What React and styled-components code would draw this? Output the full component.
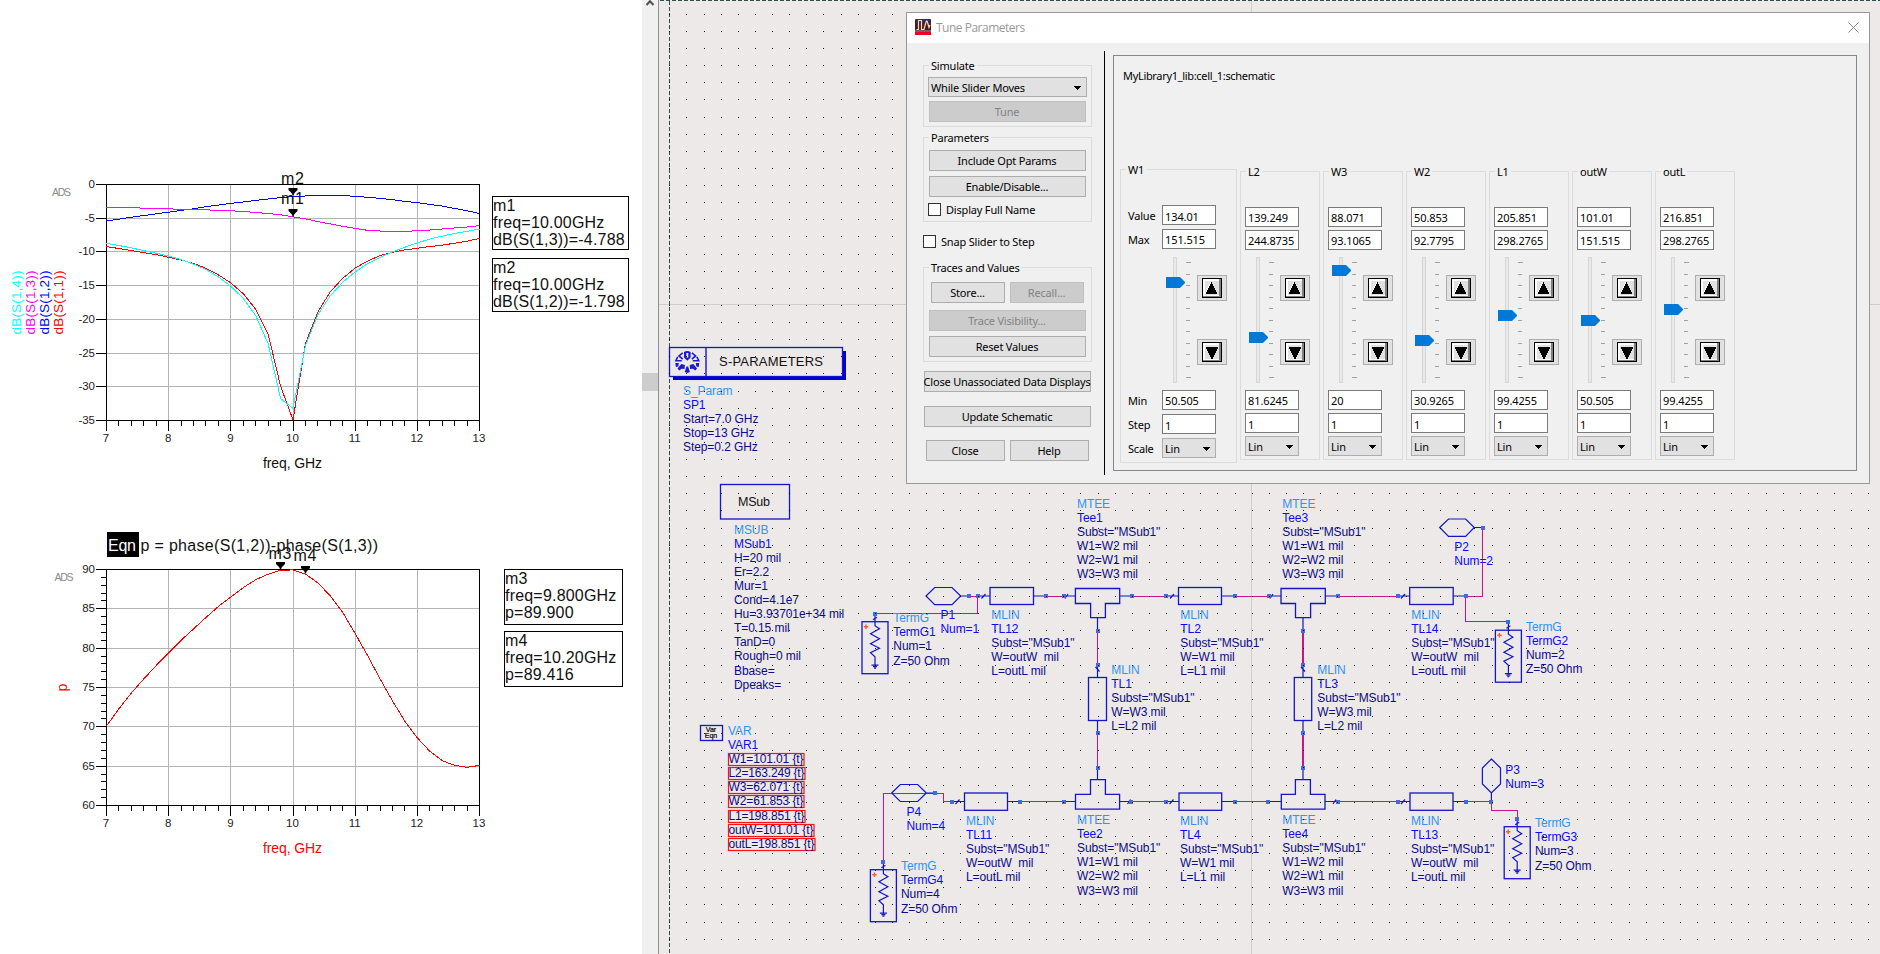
import React from "react";
import styled, { createGlobalStyle } from "styled-components";

const GlobalStyle = createGlobalStyle`
  * { box-sizing: border-box; }
  body { margin: 0; background: #fff; overflow: hidden; }
`;

const Screen = styled.div`
  position: relative;
  display: flex;
  width: 1880px;
  height: 954px;
  overflow: hidden;
  font-family: "Liberation Sans", Arial, sans-serif;
`;

/* ---------- data display ---------- */

const DataDisplay = styled.section`
  width: 642px;
  display: flex;
  flex-direction: column;
  background: #fff;
`;

const PlotRow = styled.div`
  display: flex;
  height: ${(p) => p.$height}px;
`;

const PlotSvg = styled.svg`
  flex: none;
  display: block;
  overflow: visible;
  font-family: "Liberation Sans", Arial, sans-serif;
`;

const Readouts = styled.div`
  display: flex;
  flex-direction: column;
  gap: ${(p) => p.$gap}px;
  padding-top: ${(p) => p.$top}px;
  margin-left: ${(p) => p.$left}px;
`;

const Readout = styled.div`
  width: ${(p) => p.$width}px;
  height: ${(p) => p.$height}px;
  border: 1px solid #000;
  font-size: 16px;
  line-height: 17px;
  letter-spacing: 0.2px;
  white-space: pre;
  color: #111;
`;

const PX = 106.5;
const UX = 62.17;
const fx = (f) => PX + (f - 7) * UX;

const series = (text) => text.split(" ").map(Number);

const S11 = series("-9.2 -9.5 -9.8 -10.1 -10.4 -10.8 -11.2 -11.7 -12.45 -13.4 -14.6 -16.2 -18.5 -22.2 -29.9 -34.9 -23.6 -18.9 -15.9 -13.9 -12.4 -11.35 -10.55 -10.05 -9.7 -9.45 -9.2 -9 -8.7 -8.4 -8");
const S14 = series("-8.75 -9.05 -9.4 -9.8 -10.2 -10.6 -11.15 -11.8 -12.6 -13.7 -15.1 -16.9 -19.45 -23.6 -31.75 -33.2 -23.9 -19.3 -16.5 -14.5 -12.95 -11.75 -10.8 -10 -9.3 -8.65 -8.1 -7.65 -7.25 -6.95 -6.6");
const S12 = series("-5.4 -5.15 -4.85 -4.6 -4.35 -4.1 -3.85 -3.6 -3.3 -3.05 -2.8 -2.6 -2.35 -2.15 -1.95 -1.8 -1.7 -1.65 -1.63 -1.65 -1.75 -1.9 -2.05 -2.25 -2.5 -2.7 -2.95 -3.2 -3.55 -3.9 -4.3");
const S13 = series("-3.4 -3.42 -3.45 -3.5 -3.55 -3.6 -3.7 -3.7 -3.75 -3.85 -3.9 -4 -4.15 -4.3 -4.5 -4.79 -5.1 -5.5 -5.85 -6.2 -6.5 -6.8 -6.9 -6.95 -6.95 -6.85 -6.75 -6.6 -6.45 -6.3 -6.1");
const PHASE = series("70.1 72.3 74.3 76.1 77.8 79.4 81 82.45 83.9 85.3 86.5 87.7 88.7 89.4 89.9 89.95 89.42 88.3 86.65 84.55 81.85 79.05 76.1 73.3 70.7 68.6 66.9 65.7 65.1 64.85 65.1");

function Trace({ values, color, fy }) {
  return (
    <polyline
      points={values.map((v, i) => `${fx(7 + i * 0.2)},${fy(v)}`).join(" ")}
      fill="none"
      stroke={color}
      shapeRendering="crispEdges"
    />
  );
}

function Axes({ top, min, max, minorY }) {
  const bottom = top + 236;
  const fy = (v) => top + ((max - v) / (max - min)) * 236;
  const majors = [];
  for (let v = max; v >= min; v -= 5) majors.push(v);
  const minors = [];
  if (minorY) for (let v = min; v < max; v += 1) if (v % 5) minors.push(v);
  const freqs = [7, 8, 9, 10, 11, 12, 13];
  return (
    <g shapeRendering="crispEdges">
      {majors.slice(1, -1).map((v) => (
        <line key={v} x1={107} x2={479} y1={fy(v)} y2={fy(v)} stroke="#b4b4b4" />
      ))}
      {freqs.slice(1, -1).map((f) => (
        <line key={f} x1={fx(f)} x2={fx(f)} y1={top} y2={bottom} stroke="#b4b4b4" />
      ))}
      <rect x={106.5} y={top} width={373} height={236} fill="none" stroke="#000" />
      {majors.map((v) => (
        <line key={v} x1={96} x2={107} y1={fy(v)} y2={fy(v)} stroke="#000" />
      ))}
      {minors.map((v) => (
        <line key={v} x1={101} x2={107} y1={fy(v)} y2={fy(v)} stroke="#000" />
      ))}
      {Array.from({ length: 31 }, (_, i) => (
        <line key={i} x1={fx(7 + i * 0.2)} x2={fx(7 + i * 0.2)} y1={bottom} y2={bottom + (i % 5 ? 5 : 10)} stroke="#000" />
      ))}
      {majors.map((v) => (
        <text key={v} x={95} y={fy(v) + 3.5} fontSize={11.5} textAnchor="end" fill="#222">{v}</text>
      ))}
      {freqs.map((f) => (
        <text key={f} x={fx(f) - 0.5} y={bottom + 21.5} fontSize={11.5} textAnchor="middle" fill="#222">{f}</text>
      ))}
    </g>
  );
}

function Marker({ label, x, tip, textY }) {
  return (
    <g>
      <path d={`M${x - 4.5} ${tip - 8}h9v2l-3 3l-1.5 3l-1.5 -3l-3 -3z`} fill="#000" />
      <text x={x - 12} y={textY} fontSize={16} textLength={23} fill="#111">{label}</text>
    </g>
  );
}

function DbPlot() {
  const fy = (v) => 184.5 - v * (236 / 35);
  const labels = [
    ["dB(S(1,4))", "#00ffff", 21],
    ["dB(S(1,3))", "#ff00ff", 35],
    ["dB(S(1,2))", "#0000ff", 49],
    ["dB(S(1,1))", "#ff0000", 63],
  ];
  return (
    <PlotSvg width="482" height="510">
      <Axes top={184.5} min={-35} max={0} />
      <text x={52} y={196} fontSize={10.5} textLength={19} fill="#8a8a8a">ADS</text>
      {labels.map(([t, c, x]) => (
        <text key={t} transform={`translate(${x} 334.5) rotate(-90)`} fontSize={13.5} textLength={64} fill={c}>{t}</text>
      ))}
      <Trace values={S12} color="#0000ff" fy={fy} />
      <Trace values={S13} color="#ff00ff" fy={fy} />
      <Trace values={S11} color="#ff0000" fy={fy} />
      <Trace values={S14} color="#00ffff" fy={fy} />
      <Marker label="m2" x={293} tip={196} textY={184} />
      <Marker label="m1" x={293} tip={217} textY={204} />
      <text x={263} y={468} fontSize={14} textLength={59} fill="#111">freq, GHz</text>
    </PlotSvg>
  );
}

function PhasePlot() {
  const fy = (v) => 59.5 + (90 - v) * (236 / 30);
  return (
    <PlotSvg width="482" height="444">
      <Axes top={59.5} min={60} max={90} minorY />
      <text x={54.5} y={71} fontSize={10.5} textLength={19} fill="#8a8a8a">ADS</text>
      <text transform="translate(67 181.5) rotate(-90)" fontSize={14} fill="#ff0000">p</text>
      <Trace values={PHASE} color="#ff0000" fy={fy} />
      <rect x={107} y={22} width={32} height={25} fill="#000" />
      <text x={108} y={40.5} fontSize={16} textLength={28} fill="#fff">Eqn</text>
      <text x={140.5} y={40.5} fontSize={16} textLength={237.5} fill="#111">p = phase(S(1,2))-phase(S(1,3))</text>
      <Marker label="m3" x={280.5} tip={60} textY={48.5} />
      <Marker label="m4" x={305.5} tip={64} textY={50.5} />
      <text x={263} y={343} fontSize={14} textLength={59} fill="#ff0000">freq, GHz</text>
    </PlotSvg>
  );
}

const ScrollTrack = styled.div`
  display: flex;
  flex-direction: column;
  align-items: center;
  width: 17px;
  background: #f0f0f0;
  border-right: 1px solid #919191;
`;

const ScrollArrow = styled.svg`
  display: block;
  height: 373px;
  flex: none;
`;

const ScrollThumb = styled.div`
  width: 100%;
  height: 18px;
  background: #cdcdcd;
`;

/* ---------- schematic ---------- */

const SchematicSvg = styled.svg`
  display: block;
  flex: none;
  background: #ede9e8;
  font-family: "Liberation Sans", Arial, sans-serif;
  font-size: 12px;
`;

const WIRE = "#c71585";
const LINE = "#1414c8";

const DOTS = (() => {
  let d = "";
  for (let j = 0; j < 55; j++) {
    const y = Math.floor(14.28 + 17.1277 * j);
    for (let i = -1; i < 70; i++) {
      const x = Math.floor(686.9 + 17.13 * i);
      d += `M${x} ${y}h1v1h-1z`;
    }
  }
  return d;
})();

function Lines({ x, y, type, name, params = [] }) {
  const all = [];
  if (type) all.push([type, "#2e93f5"]);
  name.forEach((n) => all.push([n, "#0a0aff"]));
  params.forEach((p) => all.push([p, "#0c0c86"]));
  return all.map(([t, c], i) => (
    <text key={i} x={x} y={Math.round(y + i * 14.1)} fill={c} letterSpacing={-0.08} xmlSpace="preserve">{t}</text>
  ));
}

function Pin({ x, y }) {
  return <rect x={Math.round(x) - 2} y={Math.round(y) - 2} width={4} height={4} fill="#4169e1" />;
}

function Term({ x, y, tx, n }) {
  return (
    <g>
      <g transform={`translate(${x} ${y})`} fill="none" stroke={LINE}>
        <rect x={-13} y={8} width={26} height={52} strokeWidth={1.3} />
        <path strokeWidth={1.2} d="M0 0V12L4.5 15L-4.5 20L4.5 25L-4.5 30L4.5 34.5L-4.5 39L0 43V52M-2 6L2 3.5" />
        <path strokeWidth={1.2} d="M-3.5 51.5H3.5M-2 53H2M-1 54.5H1" />
        <path stroke="#ff5a28" strokeWidth={1.4} d="M-11.2 13H-6.8M-9 10.8V15.2" />
      </g>
      <Pin x={x} y={y} />
      <Lines x={tx} y={y + 8.5} type="TermG" name={[`TermG${n}`]} params={[`Num=${n}`, "Z=50 Ohm"]} />
    </g>
  );
}

const BOXES = [
  [990, 587.5, 43.5, 17], [1178.5, 587.5, 43, 17], [1409.7, 587.5, 43.5, 17],
  [964.5, 793, 43, 17.3], [1179, 793, 42.7, 17.3], [1410, 793, 43, 17.3],
  [1088.5, 677.5, 18, 43], [1294.3, 677.5, 17.4, 43],
];

const PINS = [
  [969, 596], [977.5, 596], [1046, 596], [1064, 596], [1131.5, 596], [1166, 596], [1234.5, 596], [1268.7, 596],
  [1337.5, 596], [1397.7, 596], [1465.6, 596], [1483, 527.5],
  [1097.5, 631], [1097.5, 664.5], [1097.5, 733], [1097.5, 767.5],
  [1303, 631], [1303, 664.5], [1303, 733], [1303, 767.5],
  [935, 793], [952, 801.5], [1020.3, 801.5], [1063.6, 801.5], [1131.4, 801.5], [1166, 801.5], [1234.5, 801.5],
  [1268.4, 801.5], [1337.6, 801.5], [1397.6, 801.5], [1465.5, 801.5], [1491.4, 801.5],
];

const MSUB = ["H=20 mil", "Er=2.2", "Mur=1", "Cond=4.1e7", "Hu=3.93701e+34 mil", "T=0.15 mil", "TanD=0", "Rough=0 mil", "Bbase=", "Dpeaks="];
const SUBST = 'Subst="MSub1"';
const OUT = [SUBST, "W=outW  mil", "L=outL mil"];

const BLOCKS = [
  [683, 394.6, "S_Param", "SP1", ["Start=7.0 GHz", "Stop=13 GHz", "Step=0.2 GHz"]],
  [734, 533.5, "MSUB", "MSub1", MSUB],
  [728, 734.6, "VAR", "VAR1", []],
  [1077, 507.7, "MTEE", "Tee1", [SUBST, "W1=W2 mil", "W2=W1 mil", "W3=W3 mil"]],
  [1282.3, 507.7, "MTEE", "Tee3", [SUBST, "W1=W1 mil", "W2=W2 mil", "W3=W3 mil"]],
  [991.3, 619, "MLIN", "TL12", OUT],
  [1180.3, 619, "MLIN", "TL2", [SUBST, "W=W1 mil", "L=L1 mil"]],
  [1411.3, 619, "MLIN", "TL14", OUT],
  [1111.3, 673.5, "MLIN", "TL1", [SUBST, "W=W3 mil", "L=L2 mil"]],
  [1317.3, 673.5, "MLIN", "TL3", [SUBST, "W=W3 mil", "L=L2 mil"]],
  [966, 825, "MLIN", "TL11", OUT],
  [1077, 824, "MTEE", "Tee2", [SUBST, "W1=W1 mil", "W2=W2 mil", "W3=W3 mil"]],
  [1180, 825, "MLIN", "TL4", [SUBST, "W=W1 mil", "L=L1 mil"]],
  [1282.3, 824, "MTEE", "Tee4", [SUBST, "W1=W2 mil", "W2=W1 mil", "W3=W3 mil"]],
  [1411, 825, "MLIN", "TL13", OUT],
];

const VARS = [
  ["W1=101.01 {t}", 76], ["L2=163.249 {t}", 77], ["W3=62.071 {t}", 76], ["W2=61.853 {t}", 76],
  ["L1=198.851 {t}", 77], ["outW=101.01 {t}", 86], ["outL=198.851 {t}", 87],
];

function SParamSymbol() {
  return (
    <g>
      <path d="M673 376.5H842.7V351H846V380H673z" fill="#0000d2" />
      <rect x={669.5} y={347.5} width={173} height={29} fill="#ede9e8" stroke={LINE} strokeWidth={1.3} />
      <path d="M706 347.5V376.5" stroke={LINE} strokeWidth={1.4} />
      <g transform="translate(687.3 361.5)" fill="#1a1ad0">
        <path d="M-3.3 -9.5Q0 -11.5 3.3 -9.5V-4L0 -0.8L-3.3 -4zM-1 -8.5V-4H1V-8.5z" fillRule="evenodd" />
        <path d="M-4.6 -8.6L-8.3 -5.6L-4.6 -2.4M4.6 -8.6L8.3 -5.6L4.6 -2.4M-9.6 -4.6L-11.4 -0.8H-5.5M9.6 -4.6L11.4 -0.8H5.5" fill="none" stroke="#1a1ad0" strokeWidth={1.6} />
        <path d="M-12 1.5H-8.5L-9 5L-11.4 5.5zM12 1.5H8.5L9 5L11.4 5.5z" />
        <path d="M-9.8 7L-6 2.4L-2.4 3.4L-2.8 7.6L-5.6 7.2L-8 9zM9.8 7L6 2.4L2.4 3.4L2.8 7.6L5.6 7.2L8 9z" />
        <path d="M-2.6 10.5L-0.8 5H0.8L2.6 10.5L0 11.6z" />
      </g>
      <text x={719} y={366} fontSize={13} textLength={104} fill="#111">S-PARAMETERS</text>
    </g>
  );
}

function Schematic() {
  return (
    <SchematicSvg width="1221" height="954" viewBox="659 0 1221 954">
      <g shapeRendering="crispEdges">
        <path d="M659 304.5H1880M1251.5 0V954" stroke="#d0cdcd" />
        <path d="M660 0.5H1880M669.5 1V954" stroke="#2f4f4f" strokeDasharray="4 2" />
      </g>
      <SParamSymbol />
      <rect x={720.5} y={484.5} width={69} height={34.5} fill="none" stroke={LINE} strokeWidth={1.3} />
      <text x={738} y={506} fontSize={12.5} textLength={32} fill="#111">MSub</text>
      <rect x={700.5} y={725.5} width={22} height={15} fill="none" stroke={LINE} strokeWidth={1.3} />
      <g fontSize={7} textAnchor="middle" fill="#000" stroke="#000" strokeWidth={0.2}>
        <text x={711} y={732}>Var</text>
        <text x={711} y={738.3}>Eqn</text>
      </g>
      <g fill="none" stroke={WIRE} shapeRendering="crispEdges">
        <path d="M969 596.5H978M1046 596.5H1064M977.5 596V613.5H875M1131 596.5H1166M1234 596.5H1269M1337 596.5H1398M1465 596.5H1482.5V528M1465.5 596V621.5H1508.5" />
        <path d="M1097.5 631V665M1097.5 733V768" />
        <path d="M1303 631V665M1303 733V768" strokeWidth={2} />
        <path d="M883.5 862V793.5H935H943.5V801.5H952M1020 801.5H1064M1131 801.5H1166M1234 801.5H1269M1337 801.5H1398M1465 801.5H1491.5V810.5H1517.5V818" />
      </g>
      <g fill="none" stroke={LINE} strokeWidth={1.2}>
        <path d="M926 596L934.7 587.5H952L960.7 596L952 604.7H934.7ZM960.7 596H969" />
        <path d="M891.7 793L900.3 784.5H917.7L926.3 793L917.7 801.5H900.3ZM926.3 793H935" />
        <path d="M1439.7 527.5L1448.5 519H1465.6L1474.3 527.5L1465.6 536.3H1448.5ZM1474.3 527.5H1483" />
        <path d="M1491.4 759L1500.5 768V784L1491.4 793L1482.4 784V768ZM1491.4 793V801" />
        <path d="M977.5 596H990M981.5 598.5L985.5 594M1033.5 596H1046M1064 596H1075M1065 598.5L1068 594M1120 596H1131.5M1166 596H1178.5M1170 598.5L1174 594M1221.7 596H1234.5M1268.7 596H1281M1270 598.5L1273 594M1325.3 596H1337.5M1397.7 596H1409.7M1401 598.5L1405 594M1453 596H1465.6" />
        <path d="M952 801.5H964.5M955.5 804L959.5 799.5M1007.5 801.5H1020M1063.6 801.5H1075.5M1119.5 801.5H1131.4M1127.5 804L1130.5 799.5M1166 801.5H1179M1169.5 804L1173.5 799.5M1221.7 801.5H1234.5M1268.4 801.5H1281M1325 801.5H1337.6M1333 804L1336 799.5M1397.6 801.5H1410M1401 804L1405 799.5M1453 801.5H1465.5" />
        <path d="M1097.5 617.5V631M1097.5 664.5V677.5M1095.5 667L1099.5 671.5M1097.5 720.5V733M1097.5 767.5V779.7M1303 617.5V631M1303 664.5V677.5M1301 667L1305 671.5M1303 720.5V733M1303 767.5V779.7" />
        <path strokeWidth={1.3} d="M1075.4 588.5H1119.7V603.5H1105.4V617.7H1090.6V603.5H1075.4ZM1281 588.5H1325.3V603.5H1310.6V617.7H1295.5V603.5H1281Z" />
        <path strokeWidth={1.3} d="M1090.5 779.7H1105.4V794.4H1119.6V809.2H1075.5V794.4H1090.5ZM1295.4 779.7H1310.4V794.4H1325V809.2H1281.3V794.4H1295.4Z" />
        {BOXES.map(([x, y, w, h]) => (
          <rect key={`${x}-${y}`} x={x} y={y} width={w} height={h} strokeWidth={1.3} />
        ))}
      </g>
      {PINS.map(([x, y]) => <Pin key={`${x}-${y}`} x={x} y={y} />)}
      <Term x={875} y={613.7} tx={893.3} n={1} />
      <Term x={1508.4} y={622.2} tx={1526} n={2} />
      <Term x={1517.2} y={818.7} tx={1535} n={3} />
      <Term x={883.4} y={861.7} tx={901} n={4} />
      <Lines x={940.5} y={619} name={["P1", "Num=1"]} />
      <Lines x={1454.3} y={551} name={["P2", "Num=2"]} />
      <Lines x={1505.3} y={774} name={["P3", "Num=3"]} />
      <Lines x={906.5} y={816} name={["P4", "Num=4"]} />
      {BLOCKS.map(([x, y, type, name, params]) => (
        <Lines key={name} x={x} y={y} type={type} name={[name]} params={params} />
      ))}
      {VARS.map(([t, w], i) => {
        const y = Math.round(763 + i * 14.13);
        return (
          <g key={t}>
            <rect x={728.5} y={y - 9.5} width={w - 0.5} height={12} fill="none" stroke="#fb1414" strokeWidth={1.2} />
            <text x={728.5} y={y} textLength={w - 1} fill="#0c0c86">{t}</text>
          </g>
        );
      })}
      <path d={DOTS} fill="#000" shapeRendering="crispEdges" />
    </SchematicSvg>
  );
}

/* ---------- tune dialog ---------- */

const Dialog = styled.div`
  position: absolute;
  left: 906px;
  top: 12px;
  width: 964px;
  height: 472px;
  display: flex;
  flex-direction: column;
  border: 1px solid #999;
  background: #f0f0f0;
  font-family: "Noto Sans", "Open Sans", sans-serif;
  font-size: 11px;
  letter-spacing: -0.19px;
  color: #000;
  line-height: 14px;
`;

const TitleBar = styled.div`
  display: flex;
  align-items: center;
  height: 30px;
  flex: none;
  padding: 0 10px 0 8px;
  background: #fff;
  color: #999;
`;

const TitleText = styled.span`
  flex: 1;
  padding-left: 5px;
  font-family: "Open Sans", "Noto Sans", sans-serif;
  font-size: 12px;
  letter-spacing: -0.5px;
`;

const TitleIcon = styled.svg`
  display: block;
  margin-top: -2px;
`;

const DialogBody = styled.div`
  display: flex;
  flex: 1;
`;

const Sidebar = styled.div`
  display: flex;
  flex-direction: column;
  width: 169px;
  margin-left: 16px;
  padding-top: 22px;
`;

const Group = styled.div`
  display: flex;
  flex-direction: column;
  height: ${(p) => p.$height}px;
  margin-bottom: ${(p) => p.$after}px;
  padding: 0 4px;
  border: 1px solid #dcdcdc;
`;

const GroupTitle = styled.div`
  align-self: flex-start;
  height: 14px;
  flex: none;
  margin: -7px 0 ${(p) => p.$after}px ${(p) => p.$indent ?? 1}px;
  padding: 0 2px;
  background: #f0f0f0;
  white-space: nowrap;
`;

const PushButton = styled.button`
  display: flex;
  align-items: center;
  justify-content: center;
  flex: none;
  width: ${(p) => p.$width}px;
  height: 21px;
  margin: 0 0 ${(p) => p.$after ?? 0}px;
  padding: 1px 1px 0 0;
  border: 1px solid ${(p) => (p.disabled ? "#bfbfbf" : "#adadad")};
  background: ${(p) => (p.disabled ? "#cccccc" : "#e1e1e1")};
  color: ${(p) => (p.disabled ? "#838383" : "#000")};
  font: inherit;
  letter-spacing: inherit;
  white-space: nowrap;
`;

const ButtonRow = styled.div`
  display: flex;
  align-self: center;
  gap: 5px;
`;

const Combo = styled.div`
  display: flex;
  align-items: center;
  justify-content: space-between;
  flex: none;
  width: ${(p) => p.$width}px;
  height: 20px;
  margin-bottom: ${(p) => p.$after ?? 0}px;
  padding: 1px 5px 0 2px;
  border: 1px solid #adadad;
  background: #e1e1e1;
`;

const Check = styled.label`
  display: flex;
  align-items: center;
  gap: 5px;
  height: 13px;
  margin-bottom: ${(p) => p.$after ?? 0}px;
  white-space: nowrap;
`;

const CheckBox = styled.span`
  width: 13px;
  height: 13px;
  border: 1px solid #333;
  background: #fff;
`;

const Divider = styled.div`
  width: 1px;
  height: 424px;
  margin: 8px 8px 0 12px;
  background: #000;
`;

const TunePanel = styled.div`
  display: flex;
  flex-direction: column;
  width: 744px;
  height: 416px;
  margin-top: 12px;
  padding: 12px 0 0 6px;
  border: 1px solid #828790;
`;

const CellName = styled.div`
  height: 101px;
  padding-left: 3px;
  line-height: 16px;
  letter-spacing: -0.32px;
`;

const ParamRow = styled.div`
  display: flex;
  align-items: flex-start;
  gap: 3px;
`;

const ParamGroup = styled.div`
  display: flex;
  flex-direction: column;
  width: ${(p) => (p.$first ? 117 : 80)}px;
  height: ${(p) => (p.$first ? 294 : 289)}px;
  margin-top: ${(p) => (p.$first ? 0 : 2)}px;
  padding-left: ${(p) => (p.$first ? 7 : 4)}px;
  border: 1px solid #dcdcdc;
`;

const FieldRow = styled.div`
  display: flex;
  align-items: center;
  height: 20px;
  flex: none;
  margin-bottom: ${(p) => p.$after}px;
`;

const FieldLabel = styled.span`
  width: 34px;
  padding-top: 2px;
`;

const Field = styled.div`
  width: 54px;
  height: 20px;
  padding: ${(p) => (p.$low ? 3 : 2)}px 0 0 2px;
  border: 1px solid #7a7a7a;
  background: #fff;
  line-height: 15px;
  letter-spacing: -0.1px;
  white-space: nowrap;
`;

const SliderArea = styled.div`
  display: flex;
  flex: none;
  height: 126px;
  margin-left: ${(p) => (p.$first ? 38 : 4)}px;
  margin-bottom: 7px;
`;

const StepButtons = styled.div`
  display: flex;
  flex-direction: column;
  gap: 38px;
  padding: 18px 0 0 5px;
`;

const StepButton = styled.div`
  display: flex;
  align-items: center;
  justify-content: center;
  width: 30px;
  height: 26px;
  border: 1px solid #adadad;
  background: #e1e1e1;
`;

const Caret = () => (
  <svg width="7" height="4"><path d="M0 0h7v1h-1v1h-1v1h-1v1h-1v-1h-1v-1h-1v-1h-1z" fill="#000" shapeRendering="crispEdges" /></svg>
);

function StepArrow({ down }) {
  return (
    <svg width="20" height="20" shapeRendering="crispEdges">
      <rect width="20" height="20" fill="#000" />
      <rect x="1" y="1" width="18" height="18" fill="#fff" />
      <path d="M19 1V19H1V18H17V1z" fill="#808080" />
      <path d="M3 3h14v14h-14z" fill="#e1e1e1" />
      {down ? (
        <g><path d="M10 16L16 4.5" stroke="#fff" strokeWidth="1.5" /><path d="M4 4.5h12v2l-1 0v2l-1 0v2l-1 0v2l-1 0v2l-1 0v2h-2v-2l-1 0v-2l-1 0v-2l-1 0v-2l-1 0v-2l-1 0z" fill="#000" /></g>
      ) : (
        <g><path d="M9.5 4L4 15" stroke="#fff" strokeWidth="1.5" /><path d="M9 4h1v2h1v2h1v2h1v2h1v2h1v2h-11v-2h1v-2h1v-2h1v-2h1v-2h1z" fill="#000" /></g>
      )}
    </svg>
  );
}

const TICKS = [5, 17, 28, 40, 51, 63, 74, 86, 97, 109, 120];

function Slider({ top }) {
  return (
    <svg width="26" height="126" shapeRendering="crispEdges">
      <rect x="7.5" y="0.5" width="3" height="125" fill="#e7eaea" stroke="#d6d6d6" />
      {TICKS.map((y, i) => (
        <rect key={y} x="20" y={y} width={i % 10 ? 4 : 5} height="1" fill="#a0a09a" />
      ))}
      <path d={`M0 ${top}h14l5 5v1l-5 5h-14z`} fill="#0078d7" shapeRendering="auto" />
    </svg>
  );
}

const PARAMS = [
  ["W1", "134.01", "151.515", "50.505", 20],
  ["L2", "139.249", "244.8735", "81.6245", 75],
  ["W3", "88.071", "93.1065", "20", 8],
  ["W2", "50.853", "92.7795", "30.9265", 78],
  ["L1", "205.851", "298.2765", "99.4255", 53],
  ["outW", "101.01", "151.515", "50.505", 58],
  ["outL", "216.851", "298.2765", "99.4255", 47],
];

function Param({ data, first }) {
  const [name, value, max, min, top] = data;
  const gap = first ? 4 : 3;
  const row = (label, after, child) => (
    <FieldRow $after={after}>
      {first && <FieldLabel>{label}</FieldLabel>}
      {child}
    </FieldRow>
  );
  return (
    <ParamGroup $first={first}>
      <GroupTitle $after={28} $indent={first ? -2 : 1}>{name}</GroupTitle>
      {row("Value", gap, <Field $low={first}>{value}</Field>)}
      {row("Max", first ? 8 : 7, <Field>{max}</Field>)}
      <SliderArea $first={first}>
        <Slider top={top} />
        <StepButtons>
          <StepButton><StepArrow /></StepButton>
          <StepButton><StepArrow down /></StepButton>
        </StepButtons>
      </SliderArea>
      {row("Min", gap, <Field>{min}</Field>)}
      {row("Step", gap, <Field $low>1</Field>)}
      {row("Scale", 0, <Combo $width={54}>Lin<Caret /></Combo>)}
    </ParamGroup>
  );
}

function TuneDialog() {
  return (
    <Dialog>
      <TitleBar>
        <TitleIcon width="16" height="16">
          <defs>
            <linearGradient id="tune" x1="0" y1="0" x2="0" y2="1">
              <stop offset="0" stopColor="#2a2a7a" />
              <stop offset="0.5" stopColor="#541420" />
            </linearGradient>
          </defs>
          <rect width="16" height="16" rx="1" fill="url(#tune)" />
          <rect y="11" width="16" height="2" fill="#666" />
          <rect y="13" width="16" height="3" fill="#f00020" />
          <path d="M1.5 10.5H3.5V1.5H6.5V10.5H9L11 3Q12 0.5 12.7 4L14 8.5L15 6" fill="none" stroke="#f5d9a8" strokeWidth="1.2" />
        </TitleIcon>
        <TitleText>Tune Parameters</TitleText>
        <TitleIcon width="11" height="11"><path d="M0.5 0.5L10.5 10.5M10.5 0.5L0.5 10.5" stroke="#888" /></TitleIcon>
      </TitleBar>
      <DialogBody>
        <Sidebar>
          <Group $height={62} $after={10}>
            <GroupTitle $after={4}>Simulate</GroupTitle>
            <Combo $width={159} $after={4}>While Slider Moves<Caret /></Combo>
            <ButtonRow><PushButton $width={157} disabled>Tune</PushButton></ButtonRow>
          </Group>
          <Group $height={85} $after={13}>
            <GroupTitle $after={5}>Parameters</GroupTitle>
            <ButtonRow><PushButton $width={157} $after={5}>Include Opt Params</PushButton></ButtonRow>
            <ButtonRow><PushButton $width={157} $after={6}>Enable/Disable...</PushButton></ButtonRow>
            <Check><CheckBox />Display Full Name</Check>
          </Group>
          <Check $after={19}><CheckBox />Snap Slider to Step</Check>
          <Group $height={95} $after={9}>
            <GroupTitle $after={7}>Traces and Values</GroupTitle>
            <ButtonRow>
              <PushButton $width={74} $after={7}>Store...</PushButton>
              <PushButton $width={74} disabled>Recall...</PushButton>
            </ButtonRow>
            <ButtonRow><PushButton $width={157} $after={5} disabled>Trace Visibility...</PushButton></ButtonRow>
            <ButtonRow><PushButton $width={157}>Reset Values</PushButton></ButtonRow>
          </Group>
          <ButtonRow><PushButton $width={167} $after={14}>Close Unassociated Data Displays</PushButton></ButtonRow>
          <ButtonRow><PushButton $width={167} $after={13}>Update Schematic</PushButton></ButtonRow>
          <ButtonRow>
            <PushButton $width={79}>Close</PushButton>
            <PushButton $width={79}>Help</PushButton>
          </ButtonRow>
        </Sidebar>
        <Divider />
        <TunePanel>
          <CellName>MyLibrary1_lib:cell_1:schematic</CellName>
          <ParamRow>
            {PARAMS.map((p, i) => <Param key={p[0]} data={p} first={i === 0} />)}
          </ParamRow>
        </TunePanel>
      </DialogBody>
    </Dialog>
  );
}

export default function App() {
  return (
    <Screen>
      <GlobalStyle />
      <DataDisplay>
        <PlotRow $height={510}>
          <DbPlot />
          <Readouts $top={196} $left={10} $gap={8}>
            <Readout $width={137} $height={54}>{"m1\nfreq=10.00GHz\ndB(S(1,3))=-4.788"}</Readout>
            <Readout $width={137} $height={54}>{"m2\nfreq=10.00GHz\ndB(S(1,2))=-1.798"}</Readout>
          </Readouts>
        </PlotRow>
        <PlotRow $height={444}>
          <PhasePlot />
          <Readouts $top={59} $left={22} $gap={6}>
            <Readout $width={119} $height={56}>{"m3\nfreq=9.800GHz\np=89.900"}</Readout>
            <Readout $width={119} $height={56}>{"m4\nfreq=10.20GHz\np=89.416"}</Readout>
          </Readouts>
        </PlotRow>
      </DataDisplay>
      <ScrollTrack>
        <ScrollArrow width="10" viewBox="0 0 10 373"><path d="M1.5 5L5 1.2L8.5 5" fill="none" stroke="#505050" strokeWidth="2" /></ScrollArrow>
        <ScrollThumb />
      </ScrollTrack>
      <Schematic />
      <TuneDialog />
    </Screen>
  );
}
